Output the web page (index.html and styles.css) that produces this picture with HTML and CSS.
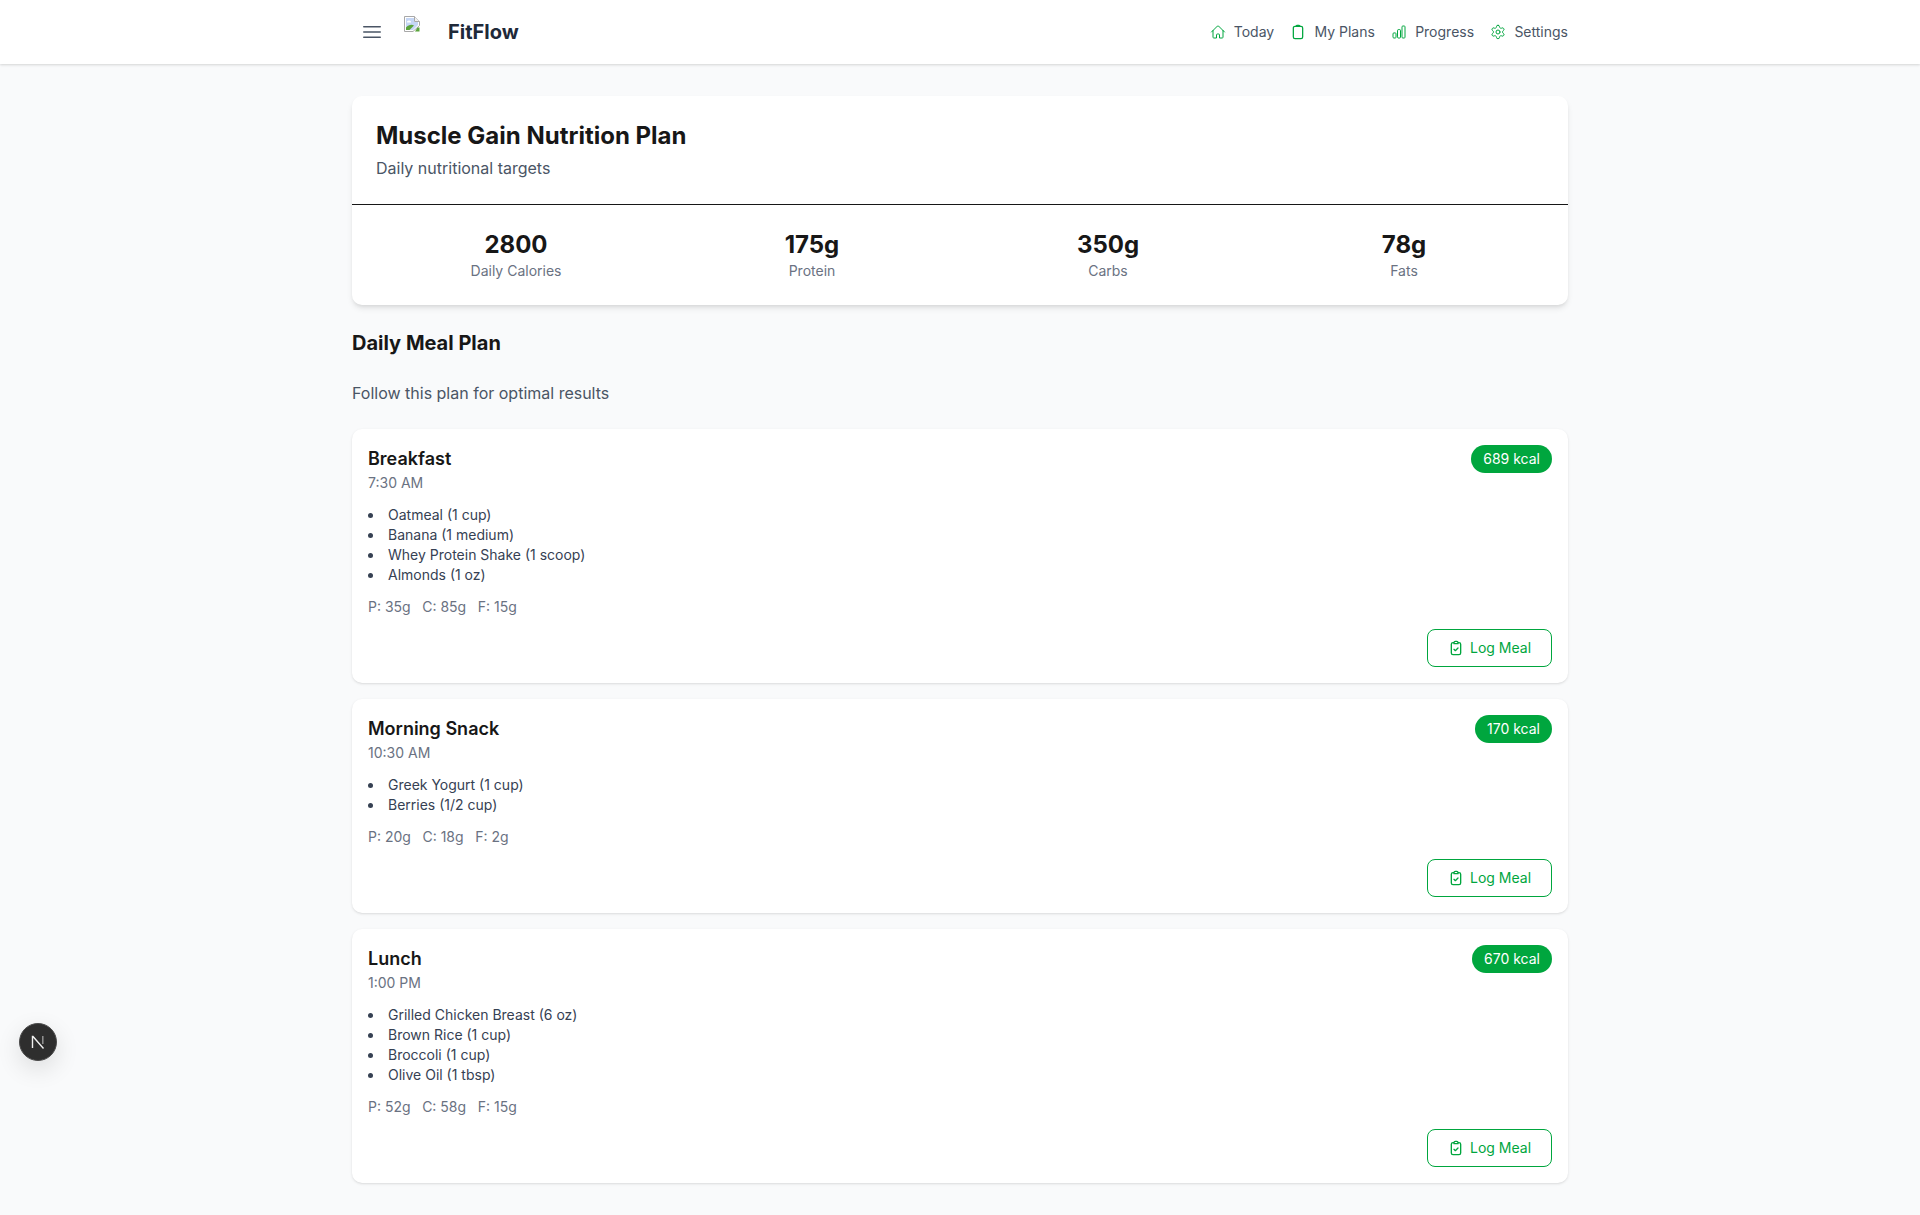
FILE: index.html
```html
<!DOCTYPE html>
<html lang="en">
<head>
    <meta charset="UTF-8">
    <meta name="viewport" content="width=device-width, initial-scale=1.0">
    <title>FitFlow</title>
    <link rel="stylesheet" href="styles.css">
</head>
<body>
    <!-- Barra superior -->
    <header class="topbar">
        <div class="topbar-inner">
            <div class="brand">
                <button class="menu-btn" aria-label="Menu">
                    <svg width="24" height="24" viewBox="0 0 24 24" fill="none" stroke="currentColor" stroke-width="1.5" stroke-linecap="round"><path d="M3.750 6.750h16.500M3.750 12h16.500M3.750 17.250h16.500"/></svg>
                </button>
                <span class="logo-img">
                    <svg width="16" height="16" viewBox="0 0 16 16"><path d="M.5.5h10l5 5v4L9 15.500H.5z" fill="#fff" stroke="#a8a8a8"/><path d="M10.500.5v5h5" fill="#f0f0f0" stroke="#a8a8a8"/><path d="M2 2h8v4h4v3l-5 5H2z" fill="#c5d6f5"/><path d="M3 5.500c1-1.500 3-1.500 4 0v1H3z" fill="#fff"/><path d="M2 14v-2.500c2.500-3 6-3.500 8-2L5.500 14z" fill="#5aa43c"/><path d="M11 15.500h4.500V11.500l-2 0z" fill="#5aa43c"/></svg>
                </span>
                <span class="logo-text">FitFlow</span>
            </div>
            <nav class="nav">
                <a class="nav-link" href="#">
                    <svg class="nav-icon" viewBox="0 0 24 24"><path d="M2.250 12l8.950-8.950a1.130 1.130 0 0 1 1.600 0L21.750 12M4.500 9.750v10.130c0 .62.500 1.120 1.130 1.120H9.750v-4.880c0-.62.500-1.120 1.130-1.120h2.250c.62 0 1.120.500 1.120 1.120V21h4.130c.62 0 1.120-.500 1.120-1.120V9.750"/></svg>
                    Today
                </a>
                <a class="nav-link" href="#">
                    <svg class="nav-icon nav-icon-strong" viewBox="0 0 24 24"><path d="M9 3.500h6M9 3.500A1.500 1.500 0 0 1 10.500 2h3A1.500 1.500 0 0 1 15 3.500M15 3.500h1.500A2.500 2.500 0 0 1 19 6v13.500a2.500 2.500 0 0 1-2.500 2.500h-9A2.500 2.500 0 0 1 5 19.500V6a2.500 2.500 0 0 1 2.500-2.500H9"/></svg>
                    My Plans
                </a>
                <a class="nav-link" href="#">
                    <svg class="nav-icon" viewBox="0 0 24 24"><path d="M3 14.500c0-.6.500-1.100 1.100-1.100h2.300c.6 0 1.100.500 1.100 1.100v5.400c0 .6-.500 1.100-1.100 1.100H4.100c-.6 0-1.100-.500-1.100-1.100zM9.750 9.500c0-.6.500-1.100 1.100-1.100h2.300c.6 0 1.100.500 1.100 1.100v10.400c0 .6-.500 1.100-1.100 1.100h-2.300c-.6 0-1.100-.500-1.100-1.100zM16.500 4.100c0-.6.500-1.100 1.100-1.100h2.300c.6 0 1.100.500 1.100 1.100v15.800c0 .6-.500 1.100-1.100 1.100h-2.300c-.6 0-1.100-.500-1.100-1.100z"/></svg>
                    Progress
                </a>
                <a class="nav-link" href="#">
                    <svg class="nav-icon" viewBox="0 0 24 24"><path d="M12.220 2h-.44a2 2 0 0 0-2 2v.18a2 2 0 0 1-1 1.730l-.43.25a2 2 0 0 1-2 0l-.15-.08a2 2 0 0 0-2.730.73l-.22.38a2 2 0 0 0 .73 2.730l.15.1a2 2 0 0 1 1 1.720v.51a2 2 0 0 1-1 1.740l-.15.09a2 2 0 0 0-.73 2.730l.22.38a2 2 0 0 0 2.730.73l.15-.08a2 2 0 0 1 2 0l.43.25a2 2 0 0 1 1 1.730V20a2 2 0 0 0 2 2h.44a2 2 0 0 0 2-2v-.18a2 2 0 0 1 1-1.730l.43-.25a2 2 0 0 1 2 0l.15.08a2 2 0 0 0 2.730-.73l.22-.39a2 2 0 0 0-.73-2.730l-.15-.08a2 2 0 0 1-1-1.740v-.5a2 2 0 0 1 1-1.740l.15-.09a2 2 0 0 0 .73-2.730l-.22-.38a2 2 0 0 0-2.730-.73l-.15.08a2 2 0 0 1-2 0l-.43-.25a2 2 0 0 1-1-1.730V4a2 2 0 0 0-2-2z"/><circle cx="12" cy="12" r="3"/></svg>
                    Settings
                </a>
            </nav>
        </div>
    </header>

    <main class="page">
        <!-- Resumen del plan -->
        <section class="plan-card">
            <div class="plan-head">
                <h1>Muscle Gain Nutrition Plan</h1>
                <p>Daily nutritional targets</p>
            </div>
            <div class="stats">
                <div class="stat"><strong>2800</strong><span>Daily Calories</span></div>
                <div class="stat"><strong>175g</strong><span>Protein</span></div>
                <div class="stat"><strong>350g</strong><span>Carbs</span></div>
                <div class="stat"><strong>78g</strong><span>Fats</span></div>
            </div>
        </section>

        <h2 class="section-title">Daily Meal Plan</h2>
        <p class="section-sub">Follow this plan for optimal results</p>

        <!-- Comidas -->
        <div class="meals">
            <article class="meal">
                <div class="meal-top">
                    <div>
                        <h3>Breakfast</h3>
                        <div class="meal-time">7:30 AM</div>
                    </div>
                    <span class="kcal">689 kcal</span>
                </div>
                <ul class="foods">
                    <li>Oatmeal (1 cup)</li>
                    <li>Banana (1 medium)</li>
                    <li>Whey Protein Shake (1 scoop)</li>
                    <li>Almonds (1 oz)</li>
                </ul>
                <div class="macros"><span>P: 35g</span><span>C: 85g</span><span>F: 15g</span></div>
                <div class="meal-foot">
                    <button class="log-btn">
                        <svg class="log-icon" viewBox="0 0 24 24"><path d="M9 4H7.500A2.500 2.500 0 0 0 5 6.500v13A2.500 2.500 0 0 0 7.500 22h9a2.500 2.500 0 0 0 2.500-2.500v-13A2.500 2.500 0 0 0 16.500 4H15M9 4a2 2 0 0 1 2-2h2a2 2 0 0 1 2 2v1.500H9zM9 14l2 2 4-4"/></svg>
                        Log Meal
                    </button>
                </div>
            </article>

            <article class="meal">
                <div class="meal-top">
                    <div>
                        <h3>Morning Snack</h3>
                        <div class="meal-time">10:30 AM</div>
                    </div>
                    <span class="kcal">170 kcal</span>
                </div>
                <ul class="foods">
                    <li>Greek Yogurt (1 cup)</li>
                    <li>Berries (1/2 cup)</li>
                </ul>
                <div class="macros"><span>P: 20g</span><span>C: 18g</span><span>F: 2g</span></div>
                <div class="meal-foot">
                    <button class="log-btn">
                        <svg class="log-icon" viewBox="0 0 24 24"><path d="M9 4H7.500A2.500 2.500 0 0 0 5 6.500v13A2.500 2.500 0 0 0 7.500 22h9a2.500 2.500 0 0 0 2.500-2.500v-13A2.500 2.500 0 0 0 16.500 4H15M9 4a2 2 0 0 1 2-2h2a2 2 0 0 1 2 2v1.500H9zM9 14l2 2 4-4"/></svg>
                        Log Meal
                    </button>
                </div>
            </article>

            <article class="meal">
                <div class="meal-top">
                    <div>
                        <h3>Lunch</h3>
                        <div class="meal-time">1:00 PM</div>
                    </div>
                    <span class="kcal">670 kcal</span>
                </div>
                <ul class="foods">
                    <li>Grilled Chicken Breast (6 oz)</li>
                    <li>Brown Rice (1 cup)</li>
                    <li>Broccoli (1 cup)</li>
                    <li>Olive Oil (1 tbsp)</li>
                </ul>
                <div class="macros"><span>P: 52g</span><span>C: 58g</span><span>F: 15g</span></div>
                <div class="meal-foot">
                    <button class="log-btn">
                        <svg class="log-icon" viewBox="0 0 24 24"><path d="M9 4H7.500A2.500 2.500 0 0 0 5 6.500v13A2.500 2.500 0 0 0 7.500 22h9a2.500 2.500 0 0 0 2.500-2.500v-13A2.500 2.500 0 0 0 16.500 4H15M9 4a2 2 0 0 1 2-2h2a2 2 0 0 1 2 2v1.500H9zM9 14l2 2 4-4"/></svg>
                        Log Meal
                    </button>
                </div>
            </article>
        </div>
    </main>

    <!-- Indicador de desarrollo -->
    <div class="dev-badge">
        <svg width="14" height="14" viewBox="0 0 14 14" fill="none"><path d="M1.500 13V1.500h.5L12.500 13.500" stroke="#f0f0f0" stroke-width="1.400"/><path d="M11.800 1v8" stroke="#999" stroke-width="1.400"/></svg>
    </div>
</body>
</html>
```

FILE: styles.css
```css
/* General */
* {
    box-sizing: border-box;
}

body {
    font-family: Inter, 'Noto Sans', sans-serif;
    margin: 0;
    background-color: #f9fafb;
    color: #101828;
    font-size: 16px;
    line-height: 24px;
}

h1, h2, h3, p, ul {
    margin: 0;
    padding: 0;
}

/* Barra superior */
.topbar {
    height: 64px;
    background-color: #fff;
    box-shadow: 0 1px 3px rgba(0, 0, 0, 0.1), 0 1px 2px rgba(0, 0, 0, 0.06);
}

.topbar-inner {
    width: 1216px;
    height: 100%;
    margin: 0 auto;
    display: flex;
    justify-content: space-between;
    align-items: center;
}

.brand {
    display: flex;
    align-items: center;
}

.menu-btn {
    width: 40px;
    height: 40px;
    padding: 8px;
    border: none;
    background: none;
    color: #4a5565;
}

.logo-img {
    width: 32px;
    height: 32px;
    margin-left: 12px;
    display: block;
}

.logo-img svg {
    display: block;
}

.logo-text {
    margin-left: 12px;
    font-size: 20px;
    line-height: 28px;
    font-weight: 700;
    color: #1e2939;
}

.nav {
    display: flex;
    align-items: center;
    gap: 16.3px;
}

.nav-link {
    display: flex;
    align-items: center;
    gap: 8px;
    font-size: 14px;
    line-height: 20px;
    color: #4a5565;
    text-decoration: none;
}

.nav-icon {
    width: 16px;
    height: 16px;
    fill: none;
    stroke: #00a63e;
    stroke-width: 1.5;
    stroke-linecap: round;
    stroke-linejoin: round;
}

.nav-icon-strong {
    stroke-width: 1.9;
}

/* Contenido */
.page {
    width: 1216px;
    margin: 0 auto;
    padding: 32px 0;
}

/* Resumen del plan */
.plan-card {
    background-color: #fff;
    border-radius: 10px;
    box-shadow: 0 4px 6px -1px rgba(0, 0, 0, 0.1), 0 2px 4px -2px rgba(0, 0, 0, 0.1);
}

.plan-head {
    padding: 24px;
    border-bottom: 1px solid #171717;
}

.plan-head h1 {
    font-size: 24px;
    line-height: 32px;
    font-weight: 700;
    color: #171717;
}

.plan-head p {
    margin-top: 4px;
    color: #4a5565;
}

.stats {
    display: grid;
    grid-template-columns: repeat(4, 1fr);
    padding: 24px 16px;
}

.stat {
    display: flex;
    flex-direction: column;
    align-items: center;
}

.stat strong {
    font-size: 24px;
    line-height: 32px;
    font-weight: 700;
    color: #171717;
}

.stat span {
    font-size: 14px;
    line-height: 20px;
    color: #6a7282;
}

.section-title {
    margin-top: 24px;
    font-size: 20px;
    line-height: 28px;
    font-weight: 700;
    color: #171717;
}

.section-sub {
    margin-top: 24px;
    color: #4a5565;
}

/* Comidas */
.meals {
    margin-top: 24px;
    display: flex;
    flex-direction: column;
    gap: 16px;
}

.meal {
    background-color: #fff;
    border-radius: 10px;
    padding: 16px;
    box-shadow: 0 1px 3px rgba(0, 0, 0, 0.1), 0 1px 2px -1px rgba(0, 0, 0, 0.1);
}

.meal-top {
    display: flex;
    justify-content: space-between;
    align-items: flex-start;
}

.meal-top h3 {
    font-size: 18px;
    line-height: 28px;
    font-weight: 600;
    color: #171717;
}

.meal-time {
    font-size: 14px;
    line-height: 20px;
    color: #6a7282;
}

.kcal {
    padding: 4px 12px;
    border-radius: 999px;
    background-color: #00a63e;
    color: #fff;
    font-size: 14px;
    line-height: 20px;
}

.foods {
    margin-top: 12px;
    list-style-position: inside;
    font-size: 14px;
    line-height: 20px;
    color: #364153;
}

.macros {
    margin-top: 12px;
    display: flex;
    gap: 11.6px;
    font-size: 14px;
    line-height: 20px;
    color: #6a7282;
}

.meal-foot {
    margin-top: 12px;
    display: flex;
    justify-content: flex-end;
}

.log-btn {
    display: flex;
    align-items: center;
    justify-content: center;
    gap: 6px;
    width: 125px;
    height: 38px;
    border: 1px solid #00a63e;
    border-radius: 8px;
    background-color: #fff;
    color: #00a63e;
    font-family: inherit;
    font-size: 14px;
    line-height: 20px;
}

.log-icon {
    width: 16px;
    height: 16px;
    fill: none;
    stroke: #00a63e;
    stroke-width: 2;
    stroke-linecap: round;
    stroke-linejoin: round;
}

/* Indicador flotante */
.dev-badge {
    position: fixed;
    left: 19px;
    top: 1023px;
    width: 38px;
    height: 38px;
    border-radius: 50%;
    background-color: #2e2e2e;
    border: 1px solid #4a4a4a;
    display: flex;
    align-items: center;
    justify-content: center;
    box-shadow: 0 8px 24px rgba(0, 0, 0, 0.12);
}
```
